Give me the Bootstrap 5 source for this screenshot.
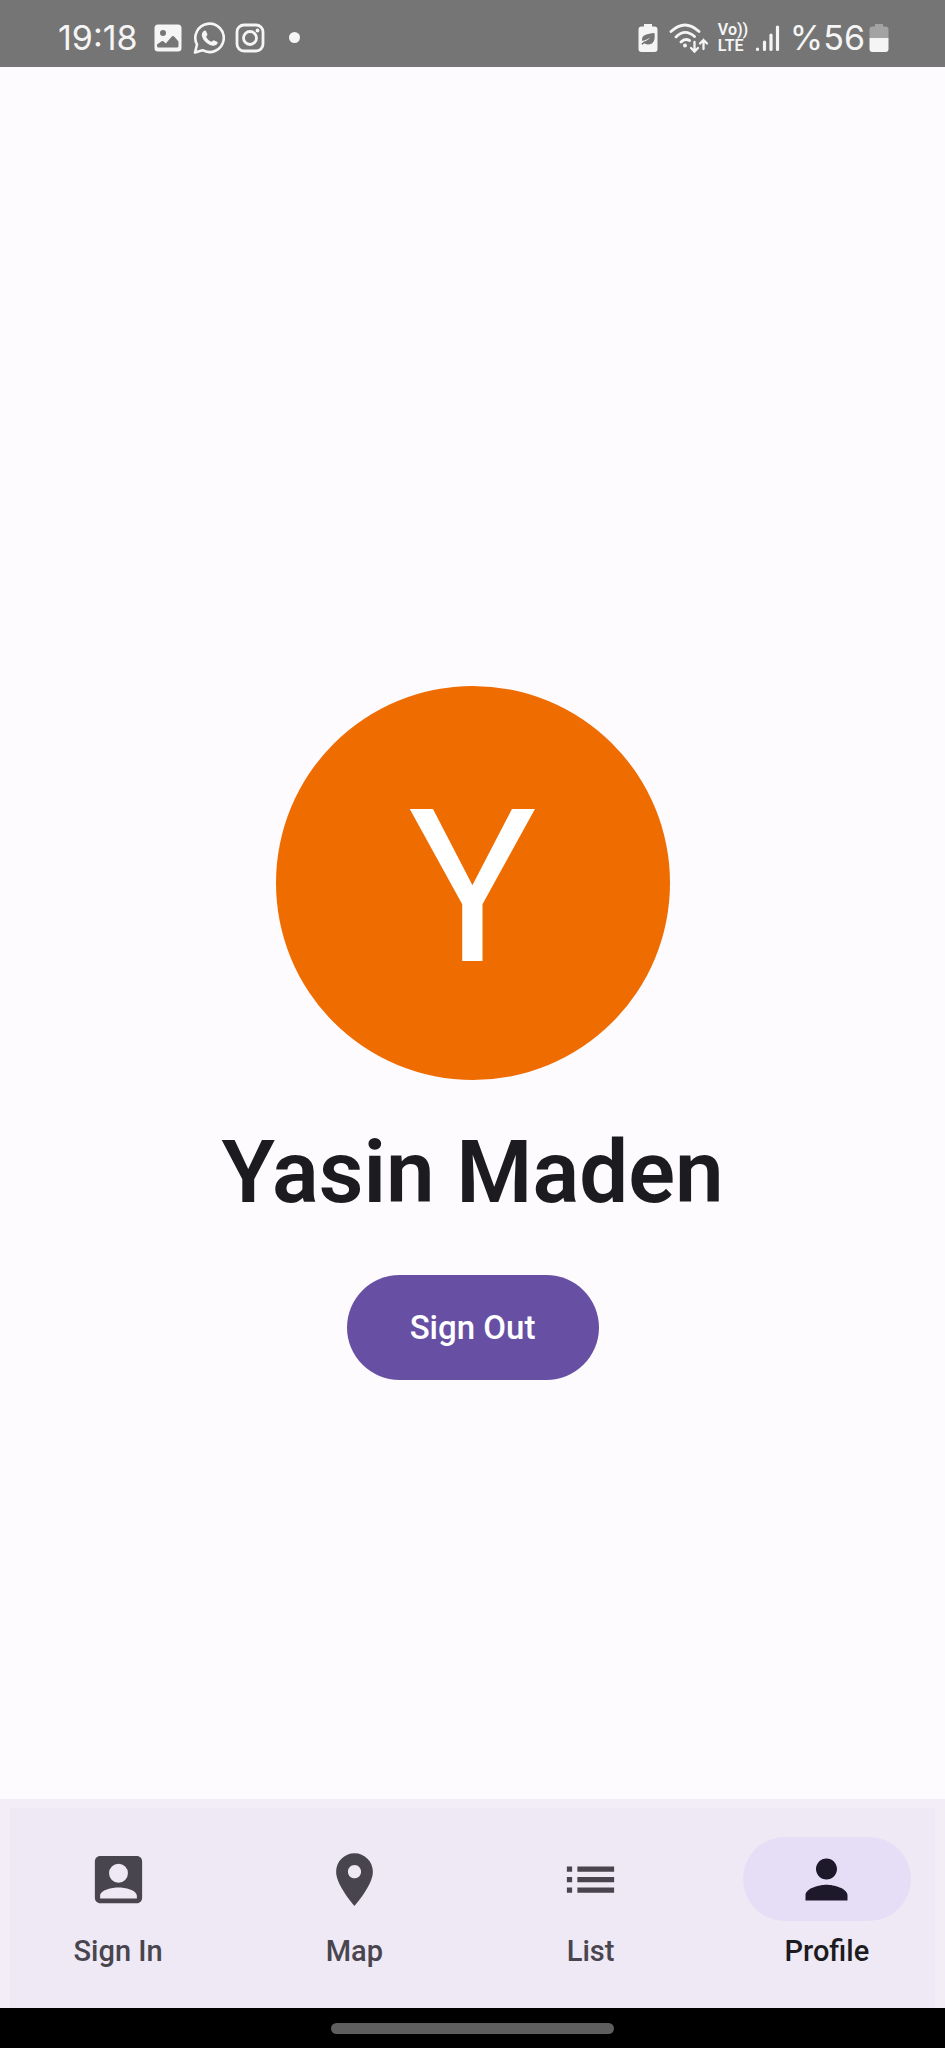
<!DOCTYPE html>
<html lang="en">
<head>
<meta charset="utf-8">
<meta name="viewport" content="width=device-width, initial-scale=1">
<title>Profile</title>
<link href="https://cdn.jsdelivr.net/npm/bootstrap@5.3.0/dist/css/bootstrap.min.css" rel="stylesheet">
<style>
  body { font-family: Roboto, sans-serif; background: #fefbff; color: #1c1b1f; }
  .status-bar { height: 67px; padding: 8px 56px 0 58px; background: #757575; color: #f5f5f5; font: 400 34px/40px Inter, sans-serif; }
  .status-bar svg { display: block; flex: none; }
  .volte { font: 600 16px/16px Roboto, sans-serif; width: 28px; white-space: nowrap; }
  .notices { gap: 9px; margin-left: 14px; }
  .notice-dot { width: 11px; height: 11px; background: currentColor; margin-left: 23px; }
  .profile { padding-top: 200px; }
  .avatar { width: 394px; height: 394px; padding-top: 10px; background: #ef6c00; color: #fff; font-size: 214px; font-weight: 450; line-height: 1; }
  .profile-name { font-size: 87px; line-height: 100px; font-weight: 600; margin: 42px 0 53px; }
  .btn-sign-out { --bs-btn-color: #fff; --bs-btn-bg: #6750a4; --bs-btn-hover-color: #fff; --bs-btn-hover-bg: #5b4693; --bs-btn-active-bg: #5b4693; --bs-btn-active-color: #fff;
    width: 252px; height: 105px; font-size: 33px; font-weight: 500; }
  .tab-bar { background: #eee9f4; border: solid #f3edf8; border-width: 9px 10px 0; }
  .tab-bar .nav { margin: 0 -10px; padding: 29px 0 36px; }
  .tab-bar .nav-link { padding: 0; color: #49454f; font-size: 29px; line-height: 42px; font-weight: 500; }
  .tab-bar .nav-link.active { color: #1c1b1f; }
  .tab-icon { width: 168px; height: 84px; margin-bottom: 9px; }
  .active .tab-icon { background: #e6def6; color: #1d192b; }
  .gesture-area { height: 40px; background: #000; }
  .gesture-pill { width: 30%; height: 11px; background: #5e5e5e; }
</style>
</head>
<body class="d-flex flex-column min-vh-100">
<header class="status-bar d-flex align-items-center justify-content-between">
  <div class="d-flex align-items-center">
    <time>19:18</time>
    <div class="notices d-flex align-items-center">
      <svg width="32" height="32" viewBox="0 0 32 32" aria-hidden="true"><path fill="currentColor" fill-rule="evenodd" d="M6 2.500h20a3.500 3.500 0 0 1 3.500 3.500v20a3.500 3.500 0 0 1-3.500 3.500H6A3.500 3.500 0 0 1 2.500 26V6A3.500 3.500 0 0 1 6 2.500zM11 8a3 3 0 1 0 0 6a3 3 0 0 0 0-6zM5 22.500v1.500q0 1.500 1.500 1.500h18.500q1.500 0 1.500-1.500v-4.500l-4.300-5q-1.200-1.200-2.400 0l-6 7-2-2q-1.300-1-2.500 0z"/></svg>
      <svg width="32" height="34" viewBox="0 0 32 34" aria-hidden="true"><path fill="none" stroke="currentColor" stroke-width="2.600" stroke-linejoin="round" d="M2 31.500l2-8A14.200 14.200 0 1 1 9.500 29.200z"/><path fill="currentColor" d="M10.700 10c.7-.8 1.900-.8 2.300.1l1.400 3.200c.3.800-1.200 2-1.200 2.600 1.200 2.300 3 3.900 5.300 4.900.7 0 1.500-1.700 2.300-1.500l3.200 1.500c.9.500.7 1.500.1 2.300-1.200 1.500-3.200 2.100-5.300 1.500C13.700 23 10 19.400 8.900 15c-.4-2 .4-3.800 1.800-5z"/></svg>
      <svg width="32" height="32" viewBox="0 0 32 32" aria-hidden="true"><g fill="none" stroke="currentColor" stroke-width="2.800"><rect x="3" y="3" width="26" height="26" rx="7"/><circle cx="16" cy="16" r="6.500"/></g><circle cx="23.500" cy="8.500" r="1.900" fill="currentColor"/></svg>
    </div>
    <span class="notice-dot rounded-circle"></span>
  </div>
  <div class="d-flex align-items-center">
    <svg width="20" height="30" viewBox="0 0 20 30" aria-hidden="true"><path fill="currentColor" d="M6 1h8v2.500h2.500a3 3 0 0 1 3 3V26a3 3 0 0 1-3 3h-13a3 3 0 0 1-3-3V6.500a3 3 0 0 1 3-3H6z"/><path fill="#757575" d="M16.500 10c1 7-1 11.500-6.500 11.500-1.700 0-2.800-.5-3.500-1.200L4 22l-.5-1.500L6 18.500c2.500-.6 4.500-2 6-4-2.500 2-5 3-8 3.200C3.500 11.500 9 11 16.500 10z"/></svg>
    <svg class="ms-2" width="48" height="32" viewBox="0 0 48 32" fill="none" stroke="currentColor" stroke-width="2.800" stroke-linecap="round" aria-hidden="true"><path d="M5 9.500Q19-3.500 33 9.500M10 15Q19 6 28.500 14.500M15 20Q19 16 23.500 18.500"/><circle cx="19" cy="23.500" r="2" fill="currentColor" stroke="none"/><path stroke-width="2.300" d="M28.500 20v9M25 26l3.500 3.500L32 26M37.500 27v-9M34 21.500l3.500-3.500 3.500 3.500"/></svg>
    <div class="volte ms-1"><div>Vo))</div><div>LTE</div></div>
    <svg class="ms-2" width="28" height="30" viewBox="0 0 28 30" stroke="currentColor" stroke-width="3.200" stroke-linecap="round" aria-hidden="true"><path d="M3.500 26v.5M10.500 19v7.500M17 12v14.500M23.500 4v22.500"/></svg>
    <span class="ms-2 me-1">%56</span>
    <svg width="20" height="30" viewBox="0 0 20 30" aria-hidden="true"><path fill="#a3a3a3" d="M6 1h8v2.500h2.500a3 3 0 0 1 3 3V15H.5V6.500a3 3 0 0 1 3-3H6z"/><path fill="currentColor" d="M.5 15h19v11a3 3 0 0 1-3 3h-13a3 3 0 0 1-3-3z"/></svg>
  </div>
</header>

<main class="profile flex-grow-1 d-flex flex-column align-items-center justify-content-center text-center">
  <div class="avatar rounded-circle d-flex align-items-center justify-content-center" aria-hidden="true">Y</div>
  <h1 class="profile-name">Yasin Maden</h1>
  <button type="button" class="btn btn-sign-out rounded-pill border-0">Sign Out</button>
</main>

<footer>
  <div class="tab-bar">
    <nav class="nav nav-fill" aria-label="Main">
      <a class="nav-link col-3 d-flex flex-column align-items-center" href="#sign-in">
        <span class="tab-icon rounded-pill d-flex align-items-center justify-content-center"><svg width="63" height="63" viewBox="0 0 24 24" fill="currentColor" aria-hidden="true"><path d="M3 5v14c0 1.100.89 2 2 2h14c1.100 0 2-.9 2-2V5c0-1.100-.9-2-2-2H5c-1.110 0-2 .9-2 2z"/><path fill="#eee9f4" d="M15.600 9.600a3.600 3.600 0 1 1-7.200 0a3.600 3.600 0 0 1 7.200 0zM5 18.200c0-2.300 4.600-3.200 7-3.200s7 .9 7 3.200v1H5z"/></svg></span>
        Sign In
      </a>
      <a class="nav-link col-3 d-flex flex-column align-items-center" href="#map">
        <span class="tab-icon rounded-pill d-flex align-items-center justify-content-center"><svg width="63" height="63" viewBox="0 0 24 24" fill="currentColor" aria-hidden="true"><path d="M12 2C8.130 2 5 5.130 5 9c0 5.250 7 13 7 13s7-7.750 7-13c0-3.870-3.130-7-7-7zm0 9.500c-1.380 0-2.500-1.120-2.500-2.500s1.120-2.500 2.500-2.500 2.500 1.120 2.500 2.500-1.120 2.500-2.500 2.500z"/></svg></span>
        Map
      </a>
      <a class="nav-link col-3 d-flex flex-column align-items-center" href="#list">
        <span class="tab-icon rounded-pill d-flex align-items-center justify-content-center"><svg width="63" height="63" viewBox="0 0 24 24" fill="currentColor" aria-hidden="true"><path d="M3 13h2v-2H3v2zm0 4h2v-2H3v2zm0-8h2V7H3v2zm4 4h14v-2H7v2zm0 4h14v-2H7v2zM7 7v2h14V7H7z"/></svg></span>
        List
      </a>
      <a class="nav-link active col-3 d-flex flex-column align-items-center" href="#profile" aria-current="page">
        <span class="tab-icon rounded-pill d-flex align-items-center justify-content-center"><svg width="63" height="63" viewBox="0 0 24 24" fill="currentColor" aria-hidden="true"><path d="M12 12c2.210 0 4-1.790 4-4s-1.790-4-4-4-4 1.790-4 4 1.790 4 4 4zm0 2c-2.670 0-8 1.340-8 4v2h16v-2c0-2.660-5.330-4-8-4z"/></svg></span>
        Profile
      </a>
    </nav>
  </div>
  <div class="gesture-area d-flex align-items-center justify-content-center"><div class="gesture-pill rounded-pill"></div></div>
</footer>
<script src="https://cdn.jsdelivr.net/npm/bootstrap@5.3.0/dist/js/bootstrap.bundle.min.js"></script>
</body>
</html>
